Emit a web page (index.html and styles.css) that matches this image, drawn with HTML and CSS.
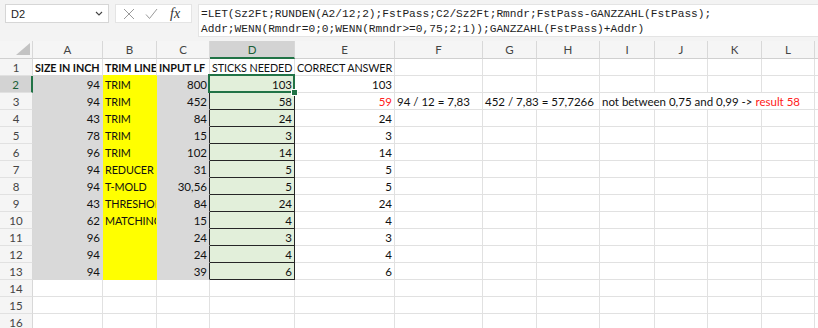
FILE: index.html
```html
<!DOCTYPE html>
<html lang="de">
<head>
  <meta charset="UTF-8" />
  <title>Sticks needed</title>
  <link rel="stylesheet" href="styles.css">
</head>
<body>
  <div class="toolbar">
    <div class="namebox">
      <span>D2</span>
      <svg class="chev" width="8" height="5" viewBox="0 0 8 5"><path d="M1 1 L4 4 L7 1" fill="none" stroke="#444" stroke-width="1.1"/></svg>
    </div>
    <div class="iconbox">
      <svg width="12" height="12" viewBox="0 0 12 12"><path d="M1 1 L11 11 M11 1 L1 11" stroke="#9a9a9a" stroke-width="1"/></svg>
      <svg width="13" height="12" viewBox="0 0 13 12"><path d="M1 6.5 L4.5 10.5 L12 1" fill="none" stroke="#9a9a9a" stroke-width="1"/></svg>
      <span class="fx">fx</span>
    </div>
    <div class="formula">=LET(Sz2Ft;RUNDEN(A2/12;2);FstPass;C2/Sz2Ft;Rmndr;FstPass-GANZZAHL(FstPass);<br>Addr;WENN(Rmndr=0;0;WENN(Rmndr&gt;=0,75;2;1));GANZZAHL(FstPass)+Addr)</div>
  </div>

  <div class="sheet">
    <!-- column headers -->
    <div class="hd corner"><span class="tri"></span></div>
    <div class="hd">A</div><div class="hd">B</div><div class="hd">C</div><div class="hd sel">D</div>
    <div class="hd">E</div><div class="hd">F</div><div class="hd">G</div><div class="hd">H</div>
    <div class="hd">I</div><div class="hd">J</div><div class="hd">K</div><div class="hd">L</div><div class="hd"></div>

    <!-- row 1 -->
    <div class="rh">1</div>
    <div class="c cap b top-gray">SIZE IN INCH</div>
    <div class="c cap b top-yel">TRIM LINE</div>
    <div class="c cap b top-gray">INPUT LF</div>
    <div class="c cap top-dark">STICKS NEEDED</div>
    <div class="c cap">CORRECT ANSWER</div>
    <div class="c"></div><div class="c"></div><div class="c"></div><div class="c"></div>
    <div class="c"></div><div class="c"></div><div class="c"></div><div class="c"></div>

    <!-- row 2 -->
    <div class="rh sel">2</div>
    <div class="c n gray">94</div><div class="c cap yel">TRIM</div><div class="c n gray dk">800</div>
    <div class="c n grn active">103</div><div class="c n">103</div>
    <div class="c"></div><div class="c"></div><div class="c"></div><div class="c"></div>
    <div class="c"></div><div class="c"></div><div class="c"></div><div class="c"></div>

    <!-- row 3 -->
    <div class="rh">3</div>
    <div class="c n gray">94</div><div class="c cap yel">TRIM</div><div class="c n gray dk">452</div>
    <div class="c n grn">58</div><div class="c n red">59</div>
    <div class="c">94 / 12 = 7,83</div>
    <div class="c span2">452 / 7,83 = 57,7266</div>
    <div class="c span4">not between 0,75 and 0,99 -&gt;&nbsp;<span class="red">result 58</span></div>
    <div class="c"></div>

    <div class="rh">4</div>
    <div class="c n gray">43</div><div class="c cap yel">TRIM</div><div class="c n gray dk">84</div>
    <div class="c n grn">24</div><div class="c n">24</div>
    <div class="c"></div><div class="c"></div><div class="c"></div><div class="c"></div>
    <div class="c"></div><div class="c"></div><div class="c"></div><div class="c"></div>

    <div class="rh">5</div>
    <div class="c n gray">78</div><div class="c cap yel">TRIM</div><div class="c n gray dk">15</div>
    <div class="c n grn">3</div><div class="c n">3</div>
    <div class="c"></div><div class="c"></div><div class="c"></div><div class="c"></div>
    <div class="c"></div><div class="c"></div><div class="c"></div><div class="c"></div>

    <div class="rh">6</div>
    <div class="c n gray">96</div><div class="c cap yel">TRIM</div><div class="c n gray dk">102</div>
    <div class="c n grn">14</div><div class="c n">14</div>
    <div class="c"></div><div class="c"></div><div class="c"></div><div class="c"></div>
    <div class="c"></div><div class="c"></div><div class="c"></div><div class="c"></div>

    <div class="rh">7</div>
    <div class="c n gray">94</div><div class="c cap yel">REDUCER</div><div class="c n gray dk">31</div>
    <div class="c n grn">5</div><div class="c n">5</div>
    <div class="c"></div><div class="c"></div><div class="c"></div><div class="c"></div>
    <div class="c"></div><div class="c"></div><div class="c"></div><div class="c"></div>

    <div class="rh">8</div>
    <div class="c n gray">94</div><div class="c cap yel">T-MOLD</div><div class="c n gray dk">30,56</div>
    <div class="c n grn">5</div><div class="c n">5</div>
    <div class="c"></div><div class="c"></div><div class="c"></div><div class="c"></div>
    <div class="c"></div><div class="c"></div><div class="c"></div><div class="c"></div>

    <div class="rh">9</div>
    <div class="c n gray">43</div><div class="c cap yel">THRESHOLD</div><div class="c n gray dk">84</div>
    <div class="c n grn">24</div><div class="c n">24</div>
    <div class="c"></div><div class="c"></div><div class="c"></div><div class="c"></div>
    <div class="c"></div><div class="c"></div><div class="c"></div><div class="c"></div>

    <div class="rh">10</div>
    <div class="c n gray">62</div><div class="c cap yel">MATCHING</div><div class="c n gray dk">15</div>
    <div class="c n grn">4</div><div class="c n">4</div>
    <div class="c"></div><div class="c"></div><div class="c"></div><div class="c"></div>
    <div class="c"></div><div class="c"></div><div class="c"></div><div class="c"></div>

    <div class="rh">11</div>
    <div class="c n gray">96</div><div class="c yel"></div><div class="c n gray dk">24</div>
    <div class="c n grn">3</div><div class="c n">3</div>
    <div class="c"></div><div class="c"></div><div class="c"></div><div class="c"></div>
    <div class="c"></div><div class="c"></div><div class="c"></div><div class="c"></div>

    <div class="rh">12</div>
    <div class="c n gray">94</div><div class="c yel"></div><div class="c n gray dk">24</div>
    <div class="c n grn">4</div><div class="c n">4</div>
    <div class="c"></div><div class="c"></div><div class="c"></div><div class="c"></div>
    <div class="c"></div><div class="c"></div><div class="c"></div><div class="c"></div>

    <div class="rh">13</div>
    <div class="c n gray">94</div><div class="c yel"></div><div class="c n gray dk">39</div>
    <div class="c n grn">6</div><div class="c n">6</div>
    <div class="c"></div><div class="c"></div><div class="c"></div><div class="c"></div>
    <div class="c"></div><div class="c"></div><div class="c"></div><div class="c"></div>

    <div class="rh">14</div>
    <div class="c"></div><div class="c"></div><div class="c"></div><div class="c"></div><div class="c"></div>
    <div class="c"></div><div class="c"></div><div class="c"></div><div class="c"></div>
    <div class="c"></div><div class="c"></div><div class="c"></div><div class="c"></div>

    <div class="rh">15</div>
    <div class="c"></div><div class="c"></div><div class="c"></div><div class="c"></div><div class="c"></div>
    <div class="c"></div><div class="c"></div><div class="c"></div><div class="c"></div>
    <div class="c"></div><div class="c"></div><div class="c"></div><div class="c"></div>

    <div class="rh">16</div>
    <div class="c"></div><div class="c"></div><div class="c"></div><div class="c"></div><div class="c"></div>
    <div class="c"></div><div class="c"></div><div class="c"></div><div class="c"></div>
    <div class="c"></div><div class="c"></div><div class="c"></div><div class="c"></div>
  </div>
</body>
</html>
```

FILE: styles.css
```css
:root {
  --grid: #e1e1e1;
  --gray: #d9d9d9;
  --yellow: #ffff00;
  --green: #e2efda;
  --dark: #262626;
  --excel: #217346;
}

* {
  box-sizing: border-box;
}

body {
  margin: 0;
  background: #fff;
  overflow: hidden;
  font-family: Lato, "Liberation Sans", sans-serif;
}

/* formula bar */
.toolbar {
  display: flex;
  align-items: flex-start;
  gap: 6px;
  height: 41px;
  padding: 4px 0 0 5px;
  background: #f3f3f3;
}

.namebox {
  width: 104px;
  height: 19px;
  display: flex;
  align-items: center;
  justify-content: space-between;
  padding: 0 5px 0 5px;
  background: #fff;
  border: 1px solid #d6d6d6;
  font-family: "Liberation Sans", sans-serif;
  font-size: 11px;
  color: #222;
}

.iconbox {
  width: 77px;
  height: 19px;
  display: flex;
  align-items: center;
  gap: 10px;
  padding-left: 7px;
  background: #fff;
  border: 1px solid #e4e4e4;
}

.fx {
  font-family: "Liberation Serif", serif;
  font-style: italic;
  font-size: 14px;
  color: #333;
  margin-left: 2px;
}

.formula {
  flex: 1;
  height: 33px;
  padding: 2px 0 0 2px;
  background: #fff;
  border: 1px solid #e4e4e4;
  border-right: none;
  font-family: "Liberation Mono", monospace;
  font-size: 11.2px;
  line-height: 15px;
  color: #1e1e1e;
  white-space: nowrap;
}

/* sheet grid */
.sheet {
  display: grid;
  grid-template-columns: 33px 70px 54px 53px 85px 100px 88px 54px 63px 55px 53px 54px 53px 1fr;
  grid-template-rows: 18px;
  grid-auto-rows: 17px;
}

.hd {
  display: flex;
  align-items: center;
  justify-content: center;
  background: #f5f5f5;
  border-right: 1px solid #d8d8d8;
  border-bottom: 1px solid #d0d0d0;
  font-size: 11.5px;
  color: #444;
}

.hd.sel {
  background: #d3d3d3;
  color: #1b5e38;
  border-bottom: 2px solid var(--excel);
}

.corner {
  position: relative;
}

.tri {
  position: absolute;
  right: 2px;
  bottom: 3px;
  width: 0;
  height: 0;
  border-left: 14px solid transparent;
  border-bottom: 12px solid #c3c3c3;
}

.rh {
  display: flex;
  align-items: center;
  justify-content: center;
  background: #f5f5f5;
  border-right: 1px solid #d8d8d8;
  border-bottom: 1px solid var(--grid);
  font-size: 11.5px;
  color: #444;
}

.rh.sel {
  background: #d3d3d3;
  color: #1b5e38;
  border-right: 2px solid var(--excel);
}

.c {
  display: flex;
  align-items: center;
  padding: 0 2px;
  border-right: 1px solid var(--grid);
  border-bottom: 1px solid var(--grid);
  font-size: 11.5px;
  color: #111;
  white-space: nowrap;
  overflow: hidden;
}

.c.cap {
  font-size: 10.8px;
  letter-spacing: -0.1px;
}

.c.n { justify-content: flex-end; }
.c.b { font-weight: bold; }
.c.red, .red { color: #ff2020; }

.span2 { grid-column: span 2; }
.span4 { grid-column: span 4; }

.top-gray { border-bottom-color: var(--gray); }
.top-yel { border-bottom-color: var(--yellow); }
.top-dark { border-bottom-color: var(--dark); }

.gray {
  background: var(--gray);
  border-color: var(--gray);
}

.yel {
  background: var(--yellow);
  border-color: var(--yellow);
}

.gray.dk { border-right-color: var(--dark); }

.grn {
  background: var(--green);
  border-right-color: var(--dark);
  border-bottom-color: var(--dark);
}

.active {
  position: relative;
  overflow: visible;
}

.active::after {
  content: "";
  position: absolute;
  left: -2px;
  top: -2px;
  right: -1px;
  bottom: -1px;
  border: 2px solid var(--excel);
}

.active::before {
  content: "";
  position: absolute;
  right: -4px;
  bottom: -4px;
  width: 5px;
  height: 5px;
  background: var(--excel);
  border: 1px solid #fff;
  z-index: 1;
}
```
